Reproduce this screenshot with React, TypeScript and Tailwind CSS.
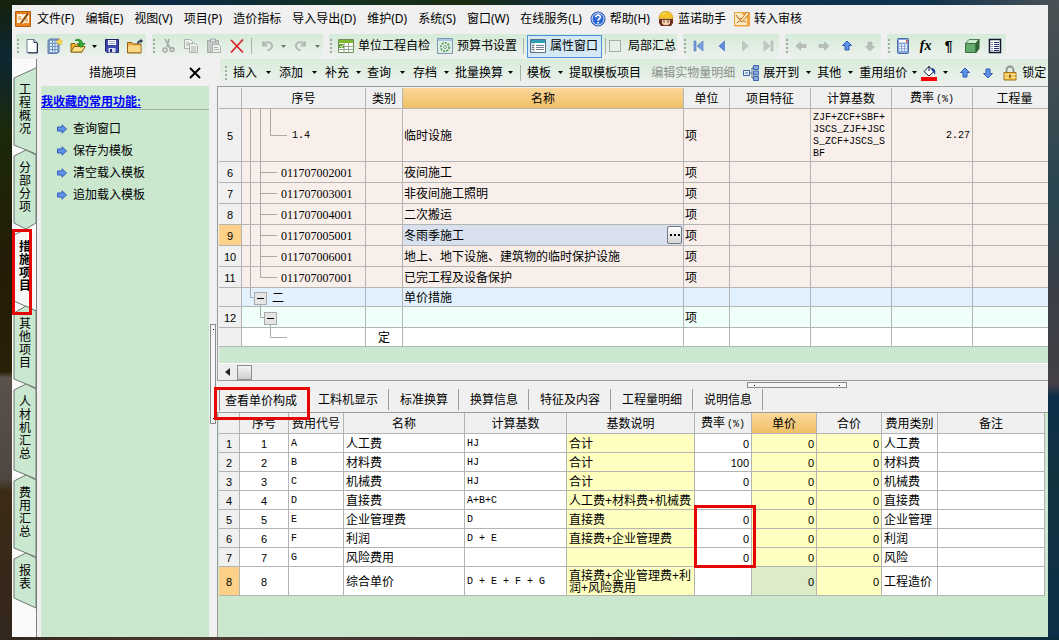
import type { ReactNode } from 'react'

const sideTabs = [
  { label: '工程概况', cls: 'h-[82px] pt-4', path: 'M24 0 L2 10 V77 L24 86' },
  { label: '分部分项', cls: 'h-[79px] pt-3', path: 'M14 0 L2 6 V73 L14 79 L24 73 V5 Z' },
  { label: '措施项目', cls: 'h-[77px] pt-3 font-bold', path: 'M14 0 L2 6 V72 L24 82', active: true },
  { label: '其他项目', cls: 'h-[78px] pt-3', path: 'M14 0 L2 7 V73 L24 82 V5 Z' },
  { label: '人材机汇总', cls: 'h-[91px] pt-3', path: 'M14 0 L2 6 V86 L24 95 V5 Z' },
  { label: '费用汇总', cls: 'h-[78px] pt-3', path: 'M14 0 L2 6 V73 L24 82 V5 Z' },
  { label: '报表', cls: 'h-[55px] pt-3', path: 'M14 0 L2 6 V45 L24 55 V5 Z' },
]

const favorites = ['查询窗口', '保存为模板', '清空载入模板', '追加载入模板']

type Item = {
  no: string
  tone: string
  h: number
  lines: string
  code?: string
  codeCls?: string
  toggle?: string
  kind?: string
  name?: string
  unit?: string
  base?: string
  rate?: string
  selected?: boolean
}

const PINK = 'bg-[#f9efea]'
const leaf = 'M8.5 0 V21 M18.5 0 V21 M18.5 10.5 H35'

const items: Item[] = [
  { no: '5', tone: PINK, h: 53, lines: 'M8.5 0 V53 M18.5 0 V53 M28.5 0 V26.5 H45', code: '1.4', codeCls: "pl-[50px] font-['Liberation_Mono',monospace] text-[10px]", name: '临时设施', unit: '项', base: 'ZJF+ZCF+SBF+JSCS_ZJF+JSCS_ZCF+JSCS_SBF', rate: '2.27' },
  { no: '6', tone: PINK, h: 21, lines: leaf, code: '011707002001', name: '夜间施工', unit: '项' },
  { no: '7', tone: PINK, h: 21, lines: leaf, code: '011707003001', name: '非夜间施工照明', unit: '项' },
  { no: '8', tone: PINK, h: 21, lines: leaf, code: '011707004001', name: '二次搬运', unit: '项' },
  { no: '9', tone: PINK, h: 21, lines: leaf, code: '011707005001', name: '冬雨季施工', unit: '项', selected: true },
  { no: '10', tone: PINK, h: 21, lines: leaf, code: '011707006001', name: '地上、地下设施、建筑物的临时保护设施', unit: '项' },
  { no: '11', tone: PINK, h: 21, lines: 'M8.5 0 V21 M18.5 0 V10.5 H35', code: '011707007001', name: '已完工程及设备保护', unit: '项' },
  { no: '', tone: 'bg-[#e1f2fe]', h: 19, lines: 'M8.5 0 V9.5 H12 M18.5 15 V19', toggle: 'ml-3', code: '二', codeCls: 'pl-[5px] text-xs', name: '单价措施' },
  { no: '12', tone: 'bg-[#effffa]', h: 21, lines: 'M18.5 0 V10.5 H22 M28.5 16 V21', toggle: 'ml-[22px]', unit: '项' },
  { no: '', tone: 'bg-white', h: 19, lines: 'M28.5 0 V9.5 H45', kind: '定' },
]

const costs = [
  { no: '1', code: 'A', name: '人工费', base: 'HJ', desc: '合计', rate: '0', type: '人工费' },
  { no: '2', code: 'B', name: '材料费', base: 'HJ', desc: '合计', rate: '100', type: '材料费' },
  { no: '3', code: 'C', name: '机械费', base: 'HJ', desc: '合计', rate: '0', type: '机械费' },
  { no: '4', code: 'D', name: '直接费', base: 'A+B+C', desc: '人工费+材料费+机械费', rate: '', type: '直接费' },
  { no: '5', code: 'E', name: '企业管理费', base: 'D', desc: '直接费', rate: '0', type: '企业管理' },
  { no: '6', code: 'F', name: '利润', base: 'D + E', desc: '直接费+企业管理费', rate: '0', type: '利润' },
  { no: '7', code: 'G', name: '风险费用', base: '', desc: '', rate: '0', type: '风险' },
  { no: '8', code: '', name: '综合单价', base: 'D + E + F + G', desc: '直接费+企业管理费+利润+风险费用', rate: '', type: '工程造价' },
]

export default function App() {
  return (
    <div className="flex min-h-screen flex-col bg-[#0c2a42] font-['Liberation_Sans','Noto_Sans_CJK_SC',sans-serif] text-xs text-black">
      <div className="h-[5px] bg-[linear-gradient(90deg,#16220e_0%,#1a2c18_8%,#0b2a47_16%,#14301f_33%,#1b2c12_44%,#0b2d4a_56%,#12334d_88%,#4a5256_100%)]" />
      <div className="flex flex-1">
        <div className="w-3 shrink-0 bg-[linear-gradient(180deg,#14210d_0%,#0d2733_8%,#1b290b_20%,#241c08_40%,#2a2008_58%,#5a514b_59%,#4e4641_75%,#3b2b16_77%,#33261d_100%)]" />
        <div className="flex min-w-0 flex-1 flex-col bg-[#f0f0f0]">
          <MenuBar />
          <MainToolbar />
          <div className="flex flex-1">
            <SideTabs />
            <FavoritesPanel />
            <main className="flex min-w-0 flex-1 flex-col">
              <EditToolbar />
              <ItemTable />
              <DetailTabs />
              <CostTable />
            </main>
          </div>
        </div>
        <div className="w-[11px] shrink-0 bg-[linear-gradient(180deg,#4a5154_0%,#3c4b52_15%,#28454f_30%,#3a3f48_45%,#444046_60%,#0b2f4b_62%,#15323f_75%,#0c3048_100%)]" />
      </div>
      <div className="h-[3px] bg-[linear-gradient(90deg,#33261d_0%,#4a3b33_20%,#3b2e2a_50%,#22282b_75%,#0c2c40_100%)]" />
    </div>
  )
}

function MenuBar() {
  return (
    <nav className="flex h-7 items-center gap-2 overflow-hidden whitespace-nowrap pl-[3px] font-['Noto_Sans','Noto_Sans_CJK_SC',sans-serif]">
      <div className="flex items-center gap-[11px]">
        <button className="flex items-center gap-[6px]"><AppIcon />文件(F)</button>
        <button>编辑(E)</button>
        <button>视图(V)</button>
        <button>项目(P)</button>
        <button>造价指标</button>
        <button>导入导出(D)</button>
        <button>维护(D)</button>
        <button>系统(S)</button>
        <button>窗口(W)</button>
        <button>在线服务(L)</button>
      </div>
      <button className="flex items-center gap-1"><HelpIcon />帮助(H)</button>
      <button className="flex items-center gap-1"><FaceIcon />蓝诺助手</button>
      <button className="flex items-center gap-1"><AuditIcon />转入审核</button>
    </nav>
  )
}

function MainToolbar() {
  return (
    <div className="flex h-[26px] items-center overflow-hidden whitespace-nowrap pl-1">
      <Group>
        <IconBtn label="新建"><path d="M3 1.500h7l3 3v10H3z" fill="#fff" stroke="#6d7f96" /><path d="M10 1.500v3h3" fill="#c9d8ea" stroke="#33415c" /><path d="M13.500 5v10H4" fill="none" stroke="#2a3346" /></IconBtn>
        <IconBtn label="新建项目"><path d="M1 2.500 3 1h9v13l-2 1.500H1z" fill="#7f9fc6" stroke="#5b7cab" /><path d="M3 3h7v11H3z" fill="#e4eefb" /><path d="M3 5.500h7M3 8.500h7M3 11.500h7M5.500 3v11M8 3v11" stroke="#6c90c0" /><path d="m12.500 0 1 2.500 2.500.5-2 1.500.5 2.500-2-1.500-2 1.500.5-2.500L9 3l2.500-.5z" fill="#ffd84a" stroke="#e6ab1c" strokeWidth=".5" /></IconBtn>
        <IconBtn label="打开"><path d="M1 14V5.500h4l1.500 1.500H12V14z" fill="#f0b429" stroke="#8c6410" /><path d="m1 14 3-5.500h11L12 14z" fill="#fde08a" stroke="#8c6410" /><path d="M5 2.500c3-2.500 7-1 7.500 3H15l-4 4-3.500-4H10C9.500 3 7.500 2 5 2.500z" fill="#2fae2f" stroke="#146a14" strokeWidth=".7" /></IconBtn>
        <Caret cls="w-[11px]" />
        <IconBtn label="保存"><path d="M1.500 1.500h13v13H3L1.500 13z" fill="#3b49b0" stroke="#1c256b" /><path d="M4 2h8v5H4z" fill="#fff" /><path d="M5 3.500h6M5 5.500h6" stroke="#98a3d6" /><path d="M4.500 10h7v4.500h-7z" fill="#d8dcee" /><path d="M6 11h2v3H6z" fill="#1c256b" /></IconBtn>
        <IconBtn label="退出"><path d="M.5 4.500H5l1.500 1.500H14v9H.5z" fill="#e9a93f" stroke="#946114" /><path d="M1 7.500h12.500V14H1z" fill="#fbd888" /><path d="M10 6c0-3 2-4 3.500-4V.5L16 3v0l-2.500 2.500V4C12 4 11.500 5 11.500 6z" fill="#33415c" /></IconBtn>
      </Group>
      <Group>
        <IconBtn label="剪切"><g fill="none" stroke="#a3a8a4" strokeWidth="1.500"><path d="M5 1l5 9M9 1 7 9M7.500 8 12 11" /><circle cx="5" cy="12" r="2" /><circle cx="12" cy="11.500" r="2" /></g></IconBtn>
        <IconBtn label="复制"><g fill="#eef2ee" stroke="#aab0ab"><path d="M1.500 1.500h6l2 2v7h-8z" /><path d="M6.500 5.500h6l2 2v7h-8z" /><path d="M8 9h5M8 11h5M8 13h5M3 5h3M3 7h3" /></g></IconBtn>
        <IconBtn label="粘贴"><path d="M1.500 2.500h11v12h-11z" fill="#c3c9c4" stroke="#a3aaa5" /><path d="M4.500 1h5v3h-5z" fill="#dfe4e0" stroke="#a3aaa5" /><path d="M6.500 6.500h6l2 2v6h-8z" fill="#f0f3f0" stroke="#aab0ab" /><path d="M8 9.500h4M8 11.500h5" stroke="#aab0ab" /></IconBtn>
        <IconBtn label="删除"><path d="M2 2l12 12.500M14 1.500 2 14.500" stroke="#d8232b" strokeWidth="1.800" /></IconBtn>
        <Sep />
        <IconBtn label="撤销"><path d="M4 3.500v4h4" fill="none" stroke="#b3b9b4" strokeWidth="2" /><path d="M4.500 7c2-4 9-3.500 8.500 1-.3 2.500-2.500 4-4.500 4.500" fill="none" stroke="#b3b9b4" strokeWidth="2" /></IconBtn>
        <Caret cls="w-[11px] text-[#6f7670]" />
        <IconBtn label="重做"><path d="M12 3.500v4H8" fill="none" stroke="#b3b9b4" strokeWidth="2" /><path d="M11.500 7C9.500 3 2.500 3.500 3 8c.3 2.500 2.500 4 4.500 4.500" fill="none" stroke="#b3b9b4" strokeWidth="2" /></IconBtn>
        <Caret cls="w-[11px] text-[#6f7670]" />
      </Group>
      <Group>
        <button className="flex items-center gap-1 pl-[5px] pr-[3px]">
          <Svg><path d="M.5 1.500h15v13H.5z" fill="#fff" stroke="#6d8f5a" /><path d="M1 2h14v3H1z" fill="#7db92f" /><path d="M1 8.500h14M1 11.500h14M6 5v9M10.500 5v9" stroke="#8fa78b" /><path d="M1 6h5v4H1z" fill="#5f9a2a" /><path d="m2 8 1.500 1.500 2-3" fill="none" stroke="#fff" /></Svg>
          单位工程自检
        </button>
        <button className="flex items-center gap-1 pl-1 pr-[3px]">
          <Svg><path d="M.5.5h15v15H.5z" fill="#dfeee0" stroke="#7b9bb5" /><path d="M1 1h14v2H1z" fill="#a9c6e3" /><circle cx="8" cy="9" r="4" fill="#fff" stroke="#5fa36b" strokeWidth="2" strokeDasharray="2 1" /><circle cx="8" cy="9" r="1.500" fill="#fff" stroke="#5fa36b" /></Svg>
          预算书设置
        </button>
        <Sep />
        <button className="flex h-[23px] items-center gap-1 border border-[#4a90d9] bg-[#d3e9f5] pl-[2px] pr-[3px]">
          <Svg><path d="M.5 1.500h15v13H.5z" fill="#fff" stroke="#5b6f86" /><path d="M1 2h14v3H1z" fill="#2f9fb3" /><path d="M1 5h4v9H1z" fill="#d5dbe3" /><path d="M2 7.500h2M2 9.500h2M2 11.500h2M6 7.500h8M6 9.500h8M6 11.500h8" stroke="#6e7f95" /></Svg>
          属性窗口
        </button>
        <Sep />
        <label className="flex items-center gap-[7px] pr-px">
          <input type="checkbox" className="size-3 appearance-none border border-[#a5aca7] bg-[#e4efe6]" />
          局部汇总
        </label>
      </Group>
      <Group>
        <IconBtn label="首条"><path d="M3 3h2v10H3zM12 3v10L6 8z" fill="#7ba0e0" stroke="#4a74c0" strokeWidth=".6" /></IconBtn>
        <IconBtn label="上一条"><path d="M10.500 3v10L5 8z" fill="#5d8be0" stroke="#3f6cc0" strokeWidth=".6" /></IconBtn>
        <IconBtn label="下一条"><path d="M5.500 3v10L11 8z" fill="#c2c9c4" stroke="#b0b7b2" strokeWidth=".6" /></IconBtn>
        <IconBtn label="末条"><path d="M4 3v10l6-5zM11 3h2v10h-2z" fill="#c2c9c4" stroke="#b0b7b2" strokeWidth=".6" /></IconBtn>
      </Group>
      <Group>
        <IconBtn label="左移"><path d="M3 8l4.500-4v2.500H13v3H7.500V12z" fill="#b9bfba" stroke="#a6aca7" strokeWidth=".6" /></IconBtn>
        <IconBtn label="右移"><path d="M13 8 8.500 4v2.500H3v3h5.500V12z" fill="#b9bfba" stroke="#a6aca7" strokeWidth=".6" /></IconBtn>
        <IconBtn label="上移"><ArrowUp /></IconBtn>
        <IconBtn label="下移"><path d="M8 13 3.500 8.500H6V4h4v4.500h2.500z" fill="#b9bfba" stroke="#a6aca7" strokeWidth=".6" /></IconBtn>
      </Group>
      <Group>
        <IconBtn label="计算器"><rect x="2.500" y=".5" width="11" height="15" rx="1" fill="#86a5d8" stroke="#4a69a5" /><path d="M4 2h8v2.500H4z" fill="#fff" /><path d="M11 2h1.500v2.500H11z" fill="#e0533d" /><path d="M4 7h8M4 9.500h8M4 12h8" stroke="#fff" strokeWidth="1.500" strokeDasharray="2 1" /></IconBtn>
        <button aria-label="函数" className="flex w-[23px] justify-center font-['Liberation_Serif',serif] text-sm font-bold italic leading-4">fx</button>
        <button aria-label="段落" className="flex w-[23px] justify-center text-sm font-bold leading-4">¶</button>
        <IconBtn label="三维"><path d="M1.500 5.500 5 1.500h10L12 5.500z" fill="#cdebd0" stroke="#4f7f55" /><path d="M1.500 5.500H12v9H1.500z" fill="#63ab6c" stroke="#3f7045" /><path d="m12 5.500 3-4v9l-3 4z" fill="#2f6b38" stroke="#2f5a35" /></IconBtn>
        <IconBtn label="列表"><path d="M2.500 1.500h11v13h-11z" fill="#fff" stroke="#11152e" strokeWidth="1.500" /><path d="M4.500 4.500h1M4.500 6.500h1M4.500 8.500h1M4.500 10.500h1M4.500 12.500h1M7 4.500h5M7 6.500h5M7 8.500h5M7 10.500h5M7 12.500h5" stroke="#22306e" /></IconBtn>
      </Group>
    </div>
  )
}

function EditToolbar() {
  return (
    <div className="ml-[3px] flex h-[27px] shrink-0 items-center overflow-hidden whitespace-nowrap bg-linear-to-b from-[#d9ecdc] to-[#eef1ee] pl-1">
      <Grip />
      <button className="flex items-center pl-[5px]">插入<Caret cls="w-[22px]" /></button>
      <button className="flex items-center">添加<Caret cls="w-[22px]" /></button>
      <button className="flex items-center">补充<Caret cls="w-[18px]" /></button>
      <button className="flex items-center">查询<Caret cls="w-[22px]" /></button>
      <button className="flex items-center">存档<Caret cls="w-[18px]" /></button>
      <button className="flex items-center">批量换算<Caret cls="w-[14px]" /></button>
      <Sep />
      <button className="flex items-center pl-[3px]">模板<Caret cls="w-[18px]" /></button>
      <button className="pr-[10px]">提取模板项目</button>
      <button className="pr-2 text-[#8b918c]">编辑实物量明细</button>
      <button className="flex items-center gap-1">
        <Svg><path d="M6 8h3M9 3v10M9 3h2M9 13h2" stroke="#5a6f93" fill="none" /><path d="M.5 5.500h6v5h-6z" fill="#eaf1fb" stroke="#3f64a8" /><path d="M10.500.5h5v4h-5zM10.500 6h5v4h-5zM10.500 11.500h5v4h-5z" fill="#86a9e0" stroke="#3f64a8" /><path d="M2 8h3" stroke="#3f64a8" /></Svg>
        展开到<Caret cls="-ml-1 w-[18px]" />
      </button>
      <button className="flex items-center">其他<Caret cls="w-[18px]" /></button>
      <button className="flex items-center">重用组价<Caret cls="w-[14px]" /></button>
      <button aria-label="填充颜色" className="flex items-center">
        <Svg><path d="M3 6.500 8 1.500l5 5-5 4.500z" fill="#fff" stroke="#111a3a" /><path d="M8 1v5" stroke="#111a3a" /><path d="M10 3c4 0 5 3 4 7-1-2-1-3-3-4z" fill="#1c3f9c" /><path d="M0 12h16v4H0z" fill="#f00" /></Svg>
        <Caret cls="w-[16px]" />
      </button>
      <IconBtn label="上移"><ArrowUp /></IconBtn>
      <IconBtn label="下移"><path d="M8 13 3.500 8.500H6V4h4v4.500h2.500z" fill="#5f93ea" stroke="#2f5bb5" /></IconBtn>
      <button className="flex items-center gap-1 pl-[3px]">
        <Svg><path d="M4.500 8V5a3.500 3.500 0 0 1 7 0v3" fill="none" stroke="#8d8d8d" strokeWidth="1.800" /><path d="M2 7.500h12v7.500H2z" fill="#f4c34d" stroke="#a0741a" /><path d="M2.500 9.500h11M2.500 12.500h11" stroke="#fde6a4" /><path d="M7.200 9.500h1.600v3.500H7.200z" fill="#7a5410" /></Svg>
        锁定
      </button>
    </div>
  )
}

function SideTabs() {
  return (
    <div className="w-[25px] shrink-0 border-r border-[#7c817d] bg-[#fafafa] pt-[9px]">
      {sideTabs.map(t => (
        <button key={t.label} className={`relative block w-6 ${t.cls}`}>
          <svg className="pointer-events-none absolute left-0 top-0 h-full w-full overflow-visible" fill={t.active ? '#f5f5f5' : '#cae7cf'} stroke="#6f7771">
            <path d={t.path} />
          </svg>
          <span className="relative ml-[7px] block h-full w-3 break-all text-left leading-[13px]">{t.label}</span>
          {t.active && <Mark cls="left-0 top-0 h-[86px] w-5" />}
        </button>
      ))}
    </div>
  )
}

function FavoritesPanel() {
  return (
    <aside className="flex w-[180px] shrink-0 flex-col pl-1">
      <div className="flex h-[27px] items-center">
        <h2 className="flex-1 text-center">措施项目</h2>
        <button aria-label="关闭" className="mr-3 p-1">
          <svg className="size-3" viewBox="0 0 12 12" stroke="#000" strokeWidth="2"><path d="M1 1l10 10M11 1 1 11" /></svg>
        </button>
      </div>
      <div className="flex flex-1">
        <div className="flex-1 bg-[#cbe8cf] pt-2">
          <h3 className="flex h-4 items-center border-b border-[#9fb3a2] font-bold leading-4 text-[#00f]">
            <a href="#favorites" className="pt-px underline">我收藏的常用功能:</a>
          </h3>
          <ul className="pt-2">
            {favorites.map(f => (
              <li key={f}>
                <a href="#favorites" className="flex h-[22px] items-center gap-[6px] pl-4">
                  <svg className="size-2.5" viewBox="0 0 10 10" fill="#5f93ea" stroke="#2f5bb5"><path d="M.5 3H5V.8L9.500 5 5 9.200V7H.5z" /></svg>
                  {f}
                </a>
              </li>
            ))}
          </ul>
        </div>
        <div className="w-2 pl-px pt-[238px]">
          <div className="flex h-[100px] w-[6px] flex-col items-center justify-between border border-[#8a8a8a] bg-[#f6f6f6] py-1">
            <i className="size-px bg-black" /><i className="size-px bg-black" />
          </div>
        </div>
      </div>
    </aside>
  )
}

const headCls = 'h-[21px] border-b border-r border-[#b4b4b4] p-0 pt-[2px] font-normal'
const cellCls = 'border-b border-r border-[#b4b4b4] p-0 pt-[2px]'

function ItemTable() {
  return (
    <section className="border-b border-l border-t border-[#9c9c9c] pl-px pt-px">
      <div className="bg-[#cbe8cf] pb-4">
        <table className="w-full table-fixed border-separate border-spacing-0 leading-3">
          <colgroup>
            <col className="w-[23px]" /><col className="w-[124px]" /><col className="w-[37px]" /><col /><col className="w-[46px]" />
            <col className="w-[81px]" /><col className="w-[81px]" /><col className="w-[81px]" /><col className="w-[75px]" />
          </colgroup>
          <thead className="bg-[#f0f0f0]">
            <tr>
              <th className={headCls} />
              <th className={headCls}>序号</th>
              <th className={headCls}>类别</th>
              <th className={`${headCls} bg-linear-to-b from-[#fbd79a] to-[#efc066]`}>名称</th>
              <th className={headCls}>单位</th>
              <th className={headCls}>项目特征</th>
              <th className={headCls}>计算基数</th>
              <th className={headCls}>费率<Pct /></th>
              <th className={`${headCls} border-r-0 pl-2`}>工程量</th>
            </tr>
          </thead>
          <tbody>
            {items.map((r, i) => (
              <tr key={i} className={r.tone} style={{ height: r.h }}>
                <td className={`${cellCls} text-center text-[11px] ${r.selected ? 'bg-[#fdd188]' : 'bg-[#f0f0f0]'}`}>{r.no}</td>
                <td className={`${cellCls} relative`}>
                  <svg className="absolute left-0 top-0 h-full w-12" stroke="#a9a9a9" fill="none"><path d={r.lines} /></svg>
                  <div className="relative flex items-center">
                    {r.toggle && (
                      <button aria-label="折叠" className={`flex size-[13px] items-center justify-center border border-[#a9a9a9] bg-[#e4e4e4] ${r.toggle}`}>
                        <i className="h-px w-[7px] bg-black" />
                      </button>
                    )}
                    <span className={r.codeCls ?? "pl-[39px] font-['Liberation_Serif',serif] text-xs leading-3"}>{r.code}</span>
                  </div>
                </td>
                <td className={`${cellCls} text-center`}>{r.kind}</td>
                <td className={`border-b border-r border-[#b4b4b4] p-0 ${r.selected ? 'bg-[#d8e1ed]' : ''}`}>
                  <div className="flex items-center justify-between pl-px">
                    <span className="pt-[2px]">{r.name}</span>
                    {r.selected && (
                      <button aria-label="更多" className="mr-px flex h-[18px] w-[15px] items-center justify-center gap-[2px] rounded-xs border border-[#6f7883] bg-linear-to-b from-white to-[#d5d5d5]">
                        <i className="size-[2px] bg-black" /><i className="size-[2px] bg-black" /><i className="size-[2px] bg-black" />
                      </button>
                    )}
                  </div>
                </td>
                <td className={`${cellCls} pl-px`}>{r.unit}</td>
                <td className={cellCls} />
                <td className={`${cellCls} break-all pl-[2px] pr-[5px] font-['Liberation_Mono',monospace] text-[10px]`}>{r.base}</td>
                <td className={`${cellCls} pr-[2px] text-right font-['Liberation_Mono',monospace] text-[10px]`}>{r.rate}</td>
                <td className={`${cellCls} border-r-0`} />
              </tr>
            ))}
          </tbody>
        </table>
      </div>
      {/* 横向滚动条 */}
      <div className="flex h-[17px] items-center border-t border-white bg-[#ededed] pl-1">
        <svg className="h-2 w-[9px]" viewBox="0 0 9 8"><path d="M7 0v8L2 4z" fill="#222" /></svg>
        <div className="ml-[5px] h-[15px] w-[15px] border border-[#8f8f8f] bg-linear-to-b from-[#f4f4f4] to-[#cfcfcf]" />
      </div>
    </section>
  )
}

function DetailTabs() {
  return (
    <div className="border-b border-[#9c9c9c]">
      <div className="flex h-2 justify-end pr-[201px] pt-px">
        <div className="flex h-[6px] w-[100px] items-center justify-between border border-[#8a8a8a] bg-[#f6f6f6] px-[6px]">
          <i className="size-px bg-black" /><i className="size-px bg-black" />
        </div>
      </div>
      <div className="flex h-[23px] items-start pl-[2px]">
        <button className="relative mr-[2px] h-[22px] border-l border-[#8a8a8a] pl-[5px] pr-2 pt-px">
          查看单价构成
          <Mark cls="-left-[6px] -top-[2px] h-[33px] w-24" />
        </button>
        {['工料机显示', '标准换算', '换算信息', '特征及内容', '工程量明细', '说明信息'].map(t => (
          <button key={t} className="h-[21px] border-r border-[#9c9c9c] pl-[11px] pr-[10px] pt-px">{t}</button>
        ))}
      </div>
    </div>
  )
}

function CostTable() {
  return (
    <section className="flex-1 border-l border-[#9c9c9c] bg-[#cbe8cf] pl-px pr-[3px]">
      <table className="w-full table-fixed border-separate border-spacing-0 leading-3">
        <colgroup>
          <col className="w-[21px]" /><col className="w-[49px]" /><col className="w-[55px]" /><col className="w-[121px]" /><col className="w-[102px]" /><col className="w-[128px]" />
          <col className="w-[57px]" /><col className="w-[65px]" /><col className="w-[65px]" /><col className="w-[56px]" /><col />
        </colgroup>
        <thead className="bg-[#f0f0f0]">
          <tr>
            <th className={headCls} />
            <th className={headCls}>序号</th>
            <th className={headCls}>费用代号</th>
            <th className={headCls}>名称</th>
            <th className={headCls}>计算基数</th>
            <th className={headCls}>基数说明</th>
            <th className={headCls}>费率<Pct /></th>
            <th className={`${headCls} bg-linear-to-b from-[#fbd79a] to-[#efc066]`}>单价</th>
            <th className={headCls}>合价</th>
            <th className={headCls}>费用类别</th>
            <th className={headCls}>备注</th>
          </tr>
        </thead>
        <tbody>
          {costs.map(c => {
            const last = c.no === '8'
            return (
              <tr key={c.no} className={`bg-white ${last ? 'h-[29px]' : 'h-[19px]'}`}>
                <td className={`${cellCls} text-center text-[11px] ${last ? 'bg-[#fdd188]' : 'bg-[#f0f0f0]'}`}>{c.no}</td>
                <td className={`${cellCls} text-center text-[11px]`}>{c.no}</td>
                <td className={`${cellCls} pl-[2px] font-['Liberation_Mono',monospace] text-[10px]`}>{c.code}</td>
                <td className={`${cellCls} pl-[2px]`}>{c.name}</td>
                <td className={`${cellCls} pl-[2px] font-['Liberation_Mono',monospace] text-[10px]`}>{c.base}</td>
                <td className={`${cellCls} bg-[#ffffc0] pl-[2px]`}>{c.desc}</td>
                <td className={`${cellCls} relative pr-[2px] text-right text-[11px]`}>
                  {c.rate}
                  {c.no === '5' && <Mark cls="-left-px -top-[5px] h-[63px] w-[62px]" />}
                </td>
                <td className={`${cellCls} pr-[2px] text-right text-[11px] ${last ? 'bg-[#dcecc8]' : 'bg-[#ffffc0]'}`}>0</td>
                <td className={`${cellCls} bg-[#ffffc0] pr-[2px] text-right text-[11px]`}>0</td>
                <td className={`${cellCls} pl-[2px]`}>{c.type}</td>
                <td className={cellCls} />
              </tr>
            )
          })}
        </tbody>
      </table>
    </section>
  )
}

function Group({ children }: { children: ReactNode }) {
  return <div className="mr-[6px] flex h-[25px] shrink-0 items-center bg-linear-to-b from-[#d5ebd9] to-[#eef1ee]"><Grip />{children}</div>
}

function Grip() {
  return (
    <svg className="h-4 w-1 shrink-0" viewBox="0 0 4 16"><path d="M2 1v15" stroke="#a3aba5" strokeWidth="2" strokeDasharray="2 2" /></svg>
  )
}

function Sep() {
  return <span className="mx-[3px] h-4 w-px shrink-0 bg-[#a9b1ab]" />
}

function Caret({ cls }: { cls: string }) {
  return (
    <span className={`flex shrink-0 justify-center ${cls}`}>
      <svg className="h-[3px] w-[5px]" viewBox="0 0 5 3" fill="currentColor"><path d="M0 0h5L2.500 3z" /></svg>
    </span>
  )
}

function Pct() {
  return <span className="ml-[2px] font-['Liberation_Mono',monospace] text-[10px]">(%)</span>
}

function Mark({ cls }: { cls: string }) {
  return <span className={`pointer-events-none absolute z-10 border-3 border-[#e60505] ${cls}`} />
}

function Svg({ children }: { children: ReactNode }) {
  return <svg className="size-4 shrink-0" viewBox="0 0 16 16" fill="none">{children}</svg>
}

function IconBtn({ label, children }: { label: string; children: ReactNode }) {
  return <button aria-label={label} className="flex w-[23px] shrink-0 justify-center"><Svg>{children}</Svg></button>
}

function ArrowUp() {
  return <path d="M8 3 3.500 7.500H6V12h4V7.500h2.500z" fill="#5f93ea" stroke="#2f5bb5" />
}

function AppIcon() {
  return <Svg><path d="M.5.5h15v15H.5z" fill="#e8821e" stroke="#b85c0c" /><path d="M2 3h5l1 1 1-1h5v9H9l-1 1-1-1H2z" fill="#fff6df" /><path d="M3 6h3M3 8h4M10 8h3M10 10h3" stroke="#d8862a" /><path d="M5 12 12 2l2 1-7 9.500z" fill="#8f4a10" /></Svg>
}

function HelpIcon() {
  return (
    <Svg>
      <circle cx="8" cy="8" r="7" fill="#2c67d3" stroke="#1c479c" /><circle cx="8" cy="8" r="6" stroke="#dbe8ff" />
      <path d="M5.800 6.300C5.800 3.300 10.500 3.500 10.300 6.200 10.200 7.800 8.100 7.800 8.100 9.800M8.100 11v1.600" stroke="#fff" strokeWidth="1.700" />
    </Svg>
  )
}

function FaceIcon() {
  return <Svg><path d="M1 8h14v4l-2 3H3l-2-3z" fill="#6e2c1c" /><path d="M1 8C1 3 4 .5 8 .5S15 3 15 8l-3-1-4 1-4-1z" fill="#f6c629" stroke="#b98a10" strokeWidth=".6" /><path d="M4 9h8v3c0 3-8 3-8 0z" fill="#f9d3ae" /><path d="M6 9.500v2M10 9.500v2" stroke="#1d1410" /><path d="M5 3.500 7 2" stroke="#fff2b0" /></Svg>
}

function AuditIcon() {
  return <Svg><path d="M.5 1.500h15v13.500H.5z" fill="#f3a63a" stroke="#e8a24a" /><path d="M1 2h6l6 5v7H1z" fill="#fde9bf" /><path d="m2 4 3 4 5-1M3 12c2-3 5-3 9-1" stroke="#b0631a" /><path d="m6 10 7-9 2 1.500-7 8.500z" fill="#fff3c9" stroke="#c98030" /></Svg>
}
